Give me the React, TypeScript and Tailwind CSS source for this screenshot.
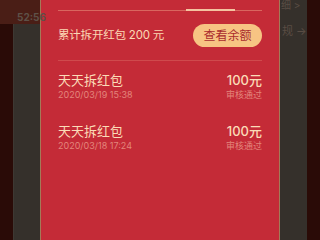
const font = { fontFamily: '"Inter", "Noto Sans CJK SC", sans-serif' };

const records = [
  { title: "天天拆红包", time: "2020/03/19 15:38", amount: "100元", status: "审核通过" },
  { title: "天天拆红包", time: "2020/03/18 17:24", amount: "100元", status: "审核通过" },
];

export default function App() {
  return (
    <div className="flex h-[240px] w-[320px] overflow-hidden bg-[#2a0b07]" style={font}>
      {/* dimmed page behind the sheet, left side */}
      <div className="w-[13px] shrink-0 bg-[#2a0b07]" />
      <div className="relative w-[27px] shrink-0 border-l border-[#3e3832] bg-[#35302b]">
        <div className="absolute -left-[14px] top-0 h-[24px] w-[40px] bg-[#4a1e16]" />
        <span className="absolute left-[3px] top-[10px] text-[10px] font-bold text-[#5e5148]">52:56</span>
      </div>

      {/* red sheet */}
      <div className="w-[240px] shrink-0 border-x border-[#a47a58] bg-[#c42b37] px-[17px]">
        <div className="relative h-[11px] border-b border-[#d9665f]">
          <div className="absolute -bottom-px left-[128px] h-[2px] w-[49px] bg-[#f4c4a0]" />
        </div>

        <div className="flex h-[50px] items-center justify-between border-b border-[#cf4a4d]">
          <span className="text-[11.5px] tracking-[-0.2px] text-[#fbd9b4]">累计拆开红包 200 元</span>
          <button className="flex h-[23px] w-[69px] items-center justify-center rounded-full bg-[#f7c483] text-[12px] text-[#a92c2e]">
            查看余额
          </button>
        </div>

        <div className="flex flex-col gap-[22px] pt-[11px]">
          {records.map((r, i) => (
            <div key={i} className="flex items-start justify-between">
              <div className="flex flex-col">
                <span className="text-[13px] leading-[16px] text-[#fbdcb8]">{r.title}</span>
                <span className="mt-[1px] text-[9px] leading-[12px] text-[#e3857b]">{r.time}</span>
              </div>
              <div className="flex flex-col items-end">
                <span className="text-[13px] font-medium leading-[16px] text-[#fbdcb8]">{r.amount}</span>
                <span className="mt-[1px] text-[9px] leading-[12px] text-[#e3857b]">{r.status}</span>
              </div>
            </div>
          ))}
        </div>
      </div>

      {/* dimmed page behind the sheet, right side */}
      <div className="relative w-[27px] shrink-0 bg-[#35302b]">
        <span className="absolute left-[1px] top-0 text-[10px] leading-[10px] text-[#5a4d44]">细 &gt;</span>
        <span className="absolute left-[2px] top-[23px] text-[11px] text-[#5a4d44]">规 →</span>
      </div>
      <div className="w-[13px] shrink-0 bg-[#2a0b07]" />
    </div>
  );
}
